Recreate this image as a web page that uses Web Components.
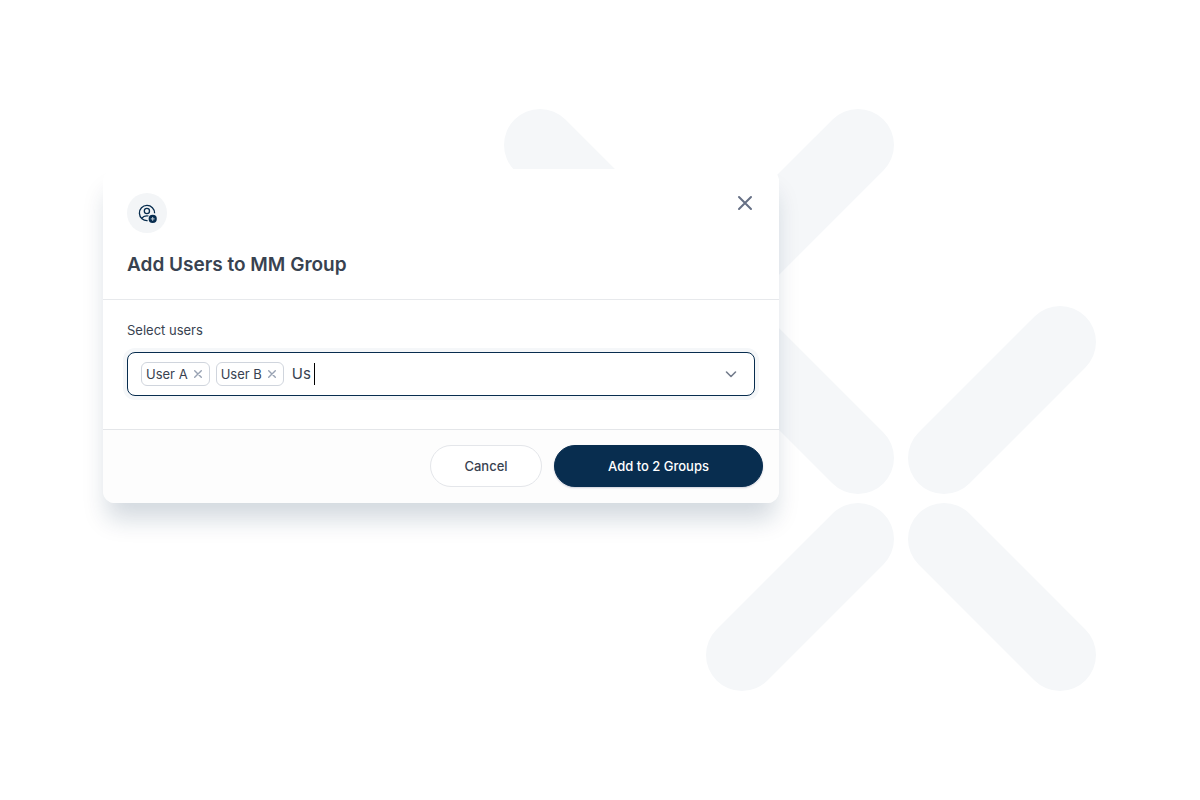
<!DOCTYPE html>
<html lang="en">
<head>
<meta charset="utf-8">
<meta name="viewport" content="width=device-width, initial-scale=1">
<title>Add Users to MM Group</title>
<style>
  body { margin: 0; background: #fff; color: #384250; font: 400 13px/20px Inter, "Liberation Sans", sans-serif; }
</style>
</head>
<body>
<app-stage>
  <brand-pattern slot="backdrop"></brand-pattern>
  <modal-dialog heading="Add Users to MM Group">
    <user-select label="Select users" query="Us">
      <user-tag>User A</user-tag>
      <user-tag>User B</user-tag>
    </user-select>
    <pill-button slot="actions">Cancel</pill-button>
    <pill-button slot="actions" variant="primary">Add to 2 Groups</pill-button>
  </modal-dialog>
</app-stage>

<script>
class BaseElement extends HTMLElement {
  render(html) {
    this.attachShadow({ mode: 'open' }).innerHTML = html;
  }
}

customElements.define('app-stage', class extends BaseElement {
  connectedCallback() {
    this.render(`
      <style>
        :host { display: grid; box-sizing: border-box; min-height: 100vh; padding: 16px 104px; align-content: center; grid-template-columns: minmax(0, 1fr); }
        ::slotted(*) { grid-area: 1 / 1; }
        ::slotted([slot=backdrop]) { justify-self: end; }
        ::slotted(modal-dialog) { align-self: start; margin-top: 60px; z-index: 1; }
      </style>
      <slot name="backdrop"></slot><slot></slot>`);
  }
});

customElements.define('brand-pattern', class extends BaseElement {
  connectedCallback() {
    this.render(`
      <style>
        :host { display: block; width: 592px; max-width: 100%; }
        svg { display: block; width: 100%; }
      </style>
      <svg viewBox="0 0 592 582" fill="none" stroke="#f5f7f9" stroke-width="72" stroke-linecap="round" aria-hidden="true">
        <path d="M36 36 152 152M354 36 238 152M238 233 354 349M556 233 440 349M354 430 238 546M440 430 556 546"/>
      </svg>`);
  }
});

customElements.define('modal-dialog', class extends BaseElement {
  connectedCallback() {
    this.render(`
      <style>
        :host { display: block; max-width: 676px; margin-left: -1px; border-radius: 12px; background: #fff; box-shadow: 0 20px 24px -4px rgba(9, 45, 77, .18); }
        header { display: flex; align-items: flex-start; justify-content: space-between; padding: 24px 24px 19px; border-bottom: 1px solid #e7e9ec; }
        .badge { display: grid; place-items: center; width: 40px; height: 40px; border-radius: 50%; background: #f3f5f7; }
        h2 { margin: 17px 0 0; font-size: 19px; line-height: 30px; font-weight: 600; }
        .close { display: grid; place-items: center; width: 20px; height: 20px; padding: 0; border: 0; background: none; color: #667085; }
        svg { display: block; }
        .body { padding: 20px 24px 33px; }
        footer { display: flex; justify-content: flex-end; gap: 12px; padding: 15px 16px 16px; border-top: 1px solid #e4e6e9; border-radius: 0 0 12px 12px; background: #fdfdfd; }
      </style>
      <section role="dialog" aria-labelledby="title">
        <header>
          <div>
            <div class="badge">
              <svg width="20" height="20" viewBox="0 0 20 20" fill="none" stroke="#082d4f" stroke-width="1.3" aria-hidden="true">
                <path d="M10.6 17.6A7.6 7.6 0 1 1 17.6 10.2"/>
                <circle cx="9.9" cy="8" r="2.6"/>
                <path d="M4.7 15.4C5.9 13.6 7.7 12.8 9.9 12.8c.6 0 1.1 0 1.6.2"/>
                <circle cx="15.7" cy="15.9" r="4.1" fill="#082d4f" stroke="none"/>
                <path d="M15.7 14v3.8M13.8 15.9h3.8" stroke="#c3ced8" stroke-width="1"/>
              </svg>
            </div>
            <h2 id="title"></h2>
          </div>
          <button class="close" type="button" aria-label="Close">
            <svg width="20" height="20" viewBox="0 0 20 20" fill="none" stroke="currentColor" stroke-width="2" stroke-linecap="round" aria-hidden="true"><path d="M4 4 16 16M16 4 4 16"/></svg>
          </button>
        </header>
        <div class="body"><slot></slot></div>
        <footer><slot name="actions"></slot></footer>
      </section>`);
    this.shadowRoot.querySelector('h2').textContent = this.getAttribute('heading');
  }
});

customElements.define('user-select', class extends BaseElement {
  connectedCallback() {
    this.render(`
      <style>
        :host { display: block; }
        label { display: block; margin-bottom: 12px; }
        .field { display: flex; align-items: center; box-sizing: border-box; height: 44px; padding: 0 13px; border: 1px solid #082d4f; border-radius: 8px; background: #fff; box-shadow: 0 0 0 4px #f5f7f9; }
        .tags { display: flex; gap: 6px; margin-right: 8px; }
        input { width: 22px; padding: 0; border: 0; outline: 0; background: none; color: inherit; font: inherit; font-size: 15px; line-height: 24px; }
        .caret { width: 1px; height: 22px; background: #000; }
        .toggle { display: grid; place-items: center; width: 20px; height: 20px; margin-left: auto; padding: 0; border: 0; background: none; color: #737c8c; }
      </style>
      <label for="query"></label>
      <div class="field">
        <div class="tags"><slot></slot></div>
        <input id="query" type="text" autocomplete="off">
        <span class="caret"></span>
        <button class="toggle" type="button" aria-label="Show users">
          <svg width="20" height="20" viewBox="0 0 20 20" fill="none" stroke="currentColor" stroke-width="1.6" stroke-linecap="round" stroke-linejoin="round" aria-hidden="true"><path d="M5.5 8 10 12.5 14.5 8"/></svg>
        </button>
      </div>`);
    this.shadowRoot.querySelector('label').textContent = this.getAttribute('label');
    this.shadowRoot.querySelector('input').value = this.getAttribute('query');
  }
});

customElements.define('user-tag', class extends BaseElement {
  connectedCallback() {
    this.render(`
      <style>
        :host { display: flex; align-items: center; gap: 3px; box-sizing: border-box; height: 24px; padding: 0 4px; border: 1px solid #d0d5dd; border-radius: 6px; background: #fff; white-space: nowrap; }
        button { display: grid; place-items: center; width: 14px; height: 14px; padding: 0; border: 0; background: none; color: #98a2b3; }
      </style>
      <slot></slot>
      <button type="button" aria-label="Remove"><svg width="14" height="14" viewBox="0 0 14 14" fill="none" stroke="currentColor" stroke-width="1.4" stroke-linecap="round" aria-hidden="true"><path d="M3.7 3.7 10.3 10.3M10.3 3.7 3.7 10.3"/></svg></button>`);
  }
});

customElements.define('pill-button', class extends BaseElement {
  connectedCallback() {
    this.render(`
      <style>
        :host { display: block; width: 112px; }
        :host([variant=primary]) { width: 209px; }
        button { box-sizing: border-box; width: 100%; height: 42px; padding: 0; border: 1px solid #e4e6ea; border-radius: 21px; background: #fff; color: #384250; font: inherit; font-weight: 500; }
        :host([variant=primary]) button { border-color: #082d4f; background: #082d4f; color: #fff; box-shadow: 0 1px 2px rgba(16, 24, 80, .2); }
      </style>
      <button type="button"><slot></slot></button>`);
  }
});
</script>
</body>
</html>
